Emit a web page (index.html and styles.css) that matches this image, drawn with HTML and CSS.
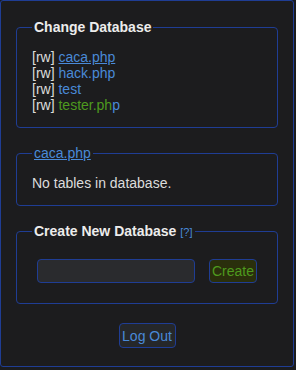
FILE: index.html
```html
<!DOCTYPE html>
<html lang="en">
<head>
    <meta charset="UTF-8">
    <meta name="viewport" content="width=device-width, initial-scale=1.0">
    <title>Database Manager</title>
    <link rel="stylesheet" href="styles.css">
</head>
<body>
    <div class="panel">
        <fieldset class="box">
            <legend>Change Database</legend>
            <ul class="db-list">
                <li><span class="perm">[rw]</span> <a href="#" class="db current">caca.php</a></li>
                <li><span class="perm">[rw]</span> <a href="#" class="db">hack.php</a></li>
                <li><span class="perm">[rw]</span> <a href="#" class="db">test</a></li>
                <li><span class="perm">[rw]</span> <a href="#" class="db db-new">tester.ph<span class="tail">p</span></a></li>
            </ul>
        </fieldset>

        <fieldset class="box">
            <legend><a href="#" class="db current">caca.php</a></legend>
            <p class="note">No tables in database.</p>
        </fieldset>

        <fieldset class="box box-create">
            <legend>Create New Database <a href="#" class="help">[?]</a></legend>
            <form class="create-row">
                <input type="text" class="field" name="new_dbname">
                <button type="button" class="btn btn-create">Create</button>
            </form>
        </fieldset>

        <div class="logout">
            <button type="button" class="btn">Log Out</button>
        </div>
    </div>
</body>
</html>
```

FILE: styles.css
```css
:root {
    --bg: #1b1c1e;
    --line: #1f3d94;
    --text: #e2e2e2;
    --link: #4a8ad8;
    --green: #4e9a1e;
}

* {
    margin: 0;
    padding: 0;
    box-sizing: border-box;
}

body {
    background: var(--bg);
    color: var(--text);
    font-family: 'Liberation Sans', Arial, sans-serif;
    font-size: 14px;
    line-height: 16px;
}

.panel {
    width: 294px;
    height: 367px;
    border: 1px solid var(--line);
    border-radius: 3px;
    padding: 18px 15px 20px;
    background: #1c1c1e;
}

.box {
    border: 1px solid var(--line);
    border-radius: 4px;
    padding: 14px 15px 14px;
    margin-bottom: 17px;
}

.box legend {
    padding: 0 2px;
    font-weight: bold;
    color: #ececec;
}

.db-list {
    list-style: none;
}

.perm {
    color: #dcdcdc;
}

.db {
    color: var(--link);
    text-decoration: none;
}

.db.current {
    text-decoration: underline;
}

.box legend .db {
    font-weight: normal;
}

.db-new {
    color: var(--green);
}

.db-new .tail {
    color: var(--link);
}

.note {
    color: #dcdcdc;
}

.help {
    color: var(--link);
    font-weight: normal;
    font-size: 11px;
    text-decoration: none;
}

.box-create {
    padding: 19px 15px 20px;
    margin-bottom: 0;
}

.create-row {
    display: flex;
    align-items: center;
    gap: 14px;
    padding-left: 5px;
}

.field {
    width: 158px;
    height: 24px;
    background: #2a2b2e;
    border: 1px solid var(--line);
    border-radius: 4px;
    color: var(--text);
    outline: none;
}

.btn {
    height: 25px;
    padding: 0 2px;
    border: 1px solid var(--line);
    border-radius: 4px;
    background: #25272a;
    color: var(--link);
    font-family: inherit;
    font-size: 14px;
    cursor: pointer;
}

.btn-create {
    width: 48px;
    height: 24px;
    background: #2a2f0c;
    color: var(--green);
}

.logout {
    display: flex;
    justify-content: center;
    margin-top: 19px;
}

.logout .btn {
    width: 57px;
}
```
